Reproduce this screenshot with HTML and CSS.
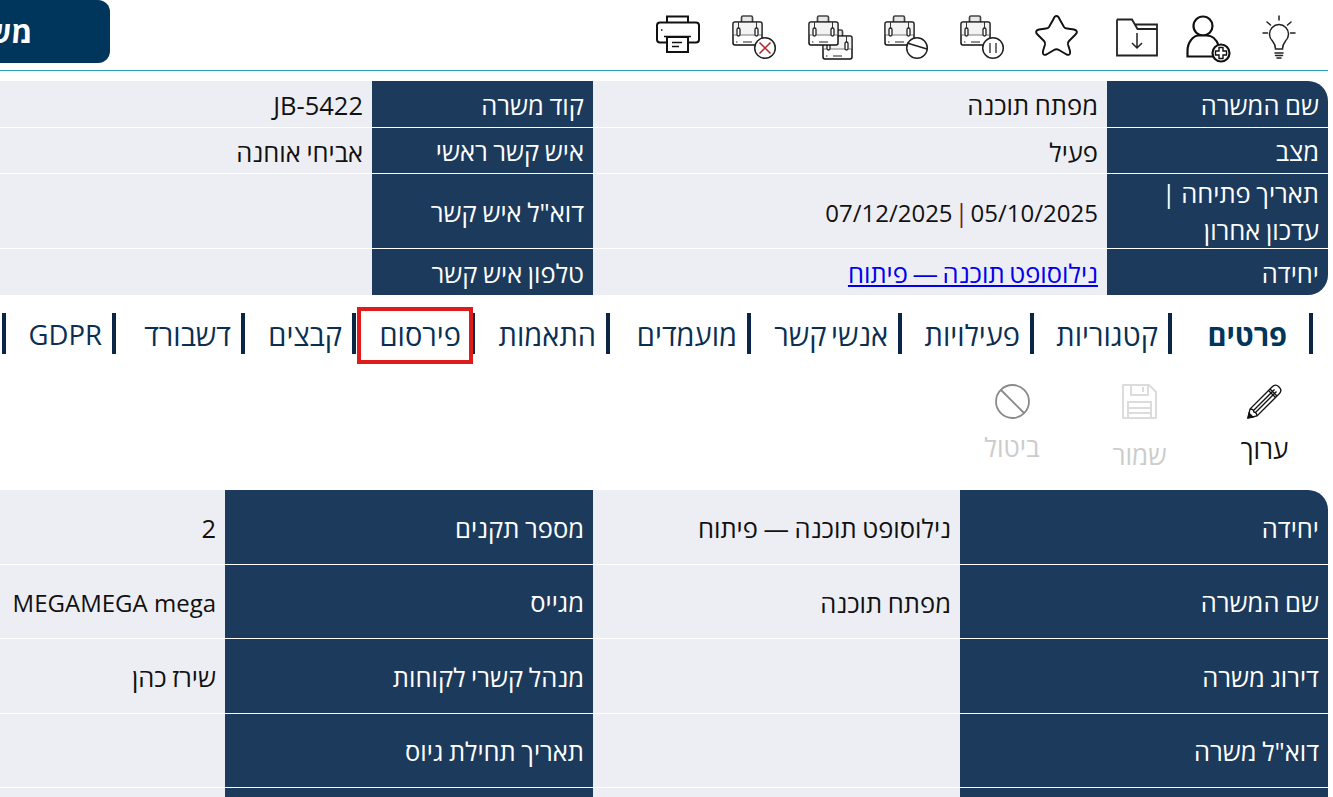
FILE: index.html
```html
<!DOCTYPE html>
<html lang="he" dir="rtl">
<head>
    <meta charset="UTF-8">
    <title>משרה</title>
    <link rel="stylesheet" href="styles.css">
</head>
<body>
    <svg class="defs" width="0" height="0">
        <defs>
            <g id="case">
                <path d="M9.500 7V2.500q0-1.500 1.500-1.500h8q1.500 0 1.500 1.500V7" fill="#e8e8e8" stroke="#444" stroke-width="1.700"/>
                <rect x="1" y="7" width="29" height="23" rx="2" fill="#fff" stroke="#111" stroke-width="1.500"/>
                <path d="M1.800 7.800h27.400v11.700H1.800z" fill="#f3f3f3"/>
                <path d="M1.500 20h28" stroke="#555" stroke-width=".8"/>
                <path d="M6.500 7v6M24.500 7v6" stroke="#333" stroke-width="1"/>
                <rect x="5" y="13" width="3" height="8" rx="1.500" fill="#fff" stroke="#222" stroke-width="1.300"/>
                <rect x="23" y="13" width="3" height="8" rx="1.500" fill="#fff" stroke="#222" stroke-width="1.300"/>
                <path d="M11 27h9M4 27h1.500" stroke="#222" stroke-width="1"/>
            </g>
        </defs>
    </svg>

    <header class="topbar">
        <div class="tools">
            <svg class="tool" width="34" height="48" viewBox="0 0 34 48"><g fill="none" stroke="#222" stroke-width="1.500" stroke-linecap="round"><path d="M13.500 34c0-3-1-5.500-3-8a9.500 9.500 0 1 1 13 0c-2 2.500-3 5-3 8z"/><path d="M13 38h8M13.500 40.500h7M15 43h4M17 1v4M5 7l3.500 3M29 7l-3.500 3M1 18h4.500M28.500 18H33"/></g></svg>
            <svg class="tool" width="44" height="48" viewBox="0 0 44 48"><g fill="#fff" stroke="#111" stroke-width="2.200"><circle cx="17" cy="11" r="9.500"/><path d="M1.500 41.500V36c0-9 6-15.500 11-15.500h8c6 0 10 4 12 10L27 41.500z"/><circle cx="35" cy="38" r="8.500"/></g><path d="M33 32.500h4v3.500h3.500v4H37v3.500h-4V40h-3.500v-4H33z" fill="#fff" stroke="#111" stroke-width="1.400"/></svg>
            <svg class="tool tool-folder" width="42" height="48" viewBox="0 0 42 48"><g fill="none" stroke="#222" stroke-width="1.800"><path d="M1 4.500h15l5.500 9.500H41M1 4.500v36h40V9.500H19"/><path d="M21 18v15M16 28l5 5 5-5" stroke-width="1.500"/></g></svg>
            <svg class="tool tool-star" width="43" height="48" viewBox="0 0 43 48"><path d="M21.500 1Q23.500 1 24.500 4L29 12Q30 13.500 32 13.500L39 14.500Q44 16 40.500 19.500L34 26Q32.500 27.500 33 29.500L35 36Q36 41 31.500 39.500L24 35Q21.500 33.500 19 35L11.500 39.500Q7 41 8 36L10 29.500Q10.500 27.500 9 26L2.500 19.500Q-1 16 4 14.500L11 13.500Q13 13.500 14 12L18.500 4Q19.500 1 21.500 1z" fill="none" stroke="#111" stroke-width="1.900"/></svg>
            <svg class="tool" width="44" height="48" viewBox="0 0 44 48"><use href="#case"/><circle cx="33" cy="33" r="10.300" fill="#fff" stroke="#222" stroke-width="1.500"/><path d="M30 28v10M36 28v10" stroke="#444" stroke-width="1.500"/></svg>
            <svg class="tool" width="44" height="48" viewBox="0 0 44 48"><use href="#case"/><circle cx="33" cy="33" r="10.300" fill="#fff" stroke="#222" stroke-width="1.500"/><path d="M23 28l20 6" stroke="#222" stroke-width="1.500"/></svg>
            <svg class="tool" width="44" height="48" viewBox="0 0 44 48"><use href="#case" x="14" y="14"/><use href="#case"/></svg>
            <svg class="tool" width="44" height="48" viewBox="0 0 44 48"><use href="#case"/><circle cx="33" cy="33" r="10.300" fill="#fff" stroke="#222" stroke-width="1.500"/><path d="M27.500 27.500l11 11M38.500 27.500l-11 11" stroke="#b3202a" stroke-width="1.500"/></svg>
            <svg class="tool" width="44" height="48" viewBox="0 0 44 48"><g fill="#fff" stroke="#111" stroke-width="2"><path d="M11 12V1.500h21V12"/><rect x="1" y="7.500" width="42" height="20" rx="3"/><rect x="11" y="22" width="21" height="15"/></g><path d="M5 15h1.500M8 21.500h27M16 27.500h10M16 31.500h7" stroke="#111" stroke-width="1.500"/></svg>
        </div>
        <button class="main-btn">משרות</button>
    </header>

    <section class="info-table summary">
        <div class="lbl first-lbl">שם המשרה</div><div class="val">מפתח תוכנה</div><div class="lbl">קוד משרה</div><div class="val">JB-5422</div>
        <div class="lbl">מצב</div><div class="val">פעיל</div><div class="lbl">איש קשר ראשי</div><div class="val">אביחי אוחנה</div>
        <div class="lbl">תאריך פתיחה | עדכון אחרון</div><div class="val"><span class="latin">05/10/2025</span><span class="sep">|</span><span class="latin">07/12/2025</span></div><div class="lbl">דוא"ל איש קשר</div><div class="val"></div>
        <div class="lbl last-lbl">יחידה</div><div class="val"><a href="#">נילוסופט תוכנה — פיתוח</a></div><div class="lbl">טלפון איש קשר</div><div class="val"></div>
    </section>

    <nav class="tabs">
        <a class="tab active">פרטים</a>
        <a class="tab">קטגוריות</a>
        <a class="tab">פעילויות</a>
        <a class="tab">אנשי קשר</a>
        <a class="tab">מועמדים</a>
        <a class="tab">התאמות</a>
        <a class="tab marked">פירסום</a>
        <a class="tab">קבצים</a>
        <a class="tab">דשבורד</a>
        <a class="tab tab-last">GDPR</a>
    </nav>

    <div class="actions">
        <div class="action edit">
            <svg width="35" height="35" viewBox="0 0 35 35"><g fill="none" stroke="#111" stroke-width="1.300"><path d="M1 34l2-9L25 3c2.500-2.500 4.500-2.500 6.500-.5l1 1c2 2 2 4-.5 6.500L10 32z"/><path d="M3 25c2 0 3 .5 3.500 1.500 0 1.500.5 2 2 2 .5.500 1.500 1.500 1.500 3.500M6.500 26.500L27.500 5.500M8.500 28.500L29.500 7.500M23 5l7 7M21.500 6.500l7 7"/><path d="M1 34l1-5 4 4z" fill="#111"/></g></svg>
            <span>ערוך</span>
        </div>
        <div class="action off save">
            <svg width="35" height="35" viewBox="0 0 35 35"><g fill="none" stroke="#dcdcdc" stroke-width="2"><path d="M1 1h26l7 7v26H1z" stroke-linejoin="round"/><path d="M9 1v10h17V1M21 3v5M6 34V18h23v16M6 24h23M6 29h23"/></g></svg>
            <span>שמור</span>
        </div>
        <div class="action off cancel">
            <svg width="35" height="35" viewBox="0 0 35 35"><g fill="none" stroke="#8a8a8a" stroke-width="1.800"><circle cx="17.500" cy="17.500" r="16.500"/><path d="M6 6l23 23"/></g></svg>
            <span>ביטול</span>
        </div>
    </div>

    <section class="info-table details">
        <div class="lbl first-lbl">יחידה</div><div class="val">נילוסופט תוכנה — פיתוח</div><div class="lbl">מספר תקנים</div><div class="val">2</div>
        <div class="lbl">שם המשרה</div><div class="val">מפתח תוכנה</div><div class="lbl">מגייס</div><div class="val mega">MEGAMEGA mega</div>
        <div class="lbl">דירוג משרה</div><div class="val"></div><div class="lbl">מנהל קשרי לקוחות</div><div class="val">שירז כהן</div>
        <div class="lbl">דוא"ל משרה</div><div class="val"></div><div class="lbl">תאריך תחילת גיוס</div><div class="val"></div>
        <div class="lbl"></div><div class="val"></div><div class="lbl"></div><div class="val"></div>
    </section>
</body>
</html>
```

FILE: styles.css
```css
* {
    margin: 0;
    padding: 0;
    box-sizing: border-box;
}

html, body {
    height: 797px;
    overflow: hidden;
}

body {
    font-family: "Open Sans", "Liberation Sans", sans-serif;
    font-size: 26px;
    color: #111;
    background-color: white;
    width: 1333px;
}

.defs {
    position: absolute;
}

/* Barra superior */
.topbar {
    height: 71px;
    margin-right: 5px;
    border-bottom: 1px solid #2a9fb5;
    display: flex;
    justify-content: space-between;
    padding-right: 32px;
}

.tools {
    display: flex;
    align-items: flex-start;
    gap: 32px;
    padding-top: 15px;
}

.tool {
    flex: none;
    overflow: visible;
}

.tool-folder {
    margin-right: -4px;
}

.tool-star {
    margin-right: 6px;
    margin-left: -1px;
}

.main-btn {
    width: 246px;
    height: 63px;
    margin-left: -136px;
    background-color: #00355c;
    color: white;
    border: none;
    border-top-right-radius: 12px;
    border-bottom-right-radius: 12px;
    font-family: inherit;
    font-size: 30px;
    font-weight: 700;
    flex: none;
}

/* Tablas */
.info-table {
    display: grid;
    margin-right: 5px;
    gap: 1px 0;
    font-size: 25.5px;
    word-spacing: -1px;
}

.summary {
    width: 1400px;
    margin-top: 10px;
    grid-template-columns: 221px 514px 221px 444px;
    grid-template-rows: 46px 45px 74px 46px;
}

.details {
    width: 1328px;
    grid-template-columns: 368px 367px 368px 225px;
    grid-template-rows: 74px 73px 74px 73px 74px;
}

.lbl {
    background-color: #1b3a5c;
    color: white;
    padding: 2px 9px 0;
    display: flex;
    align-items: center;
    line-height: 37px;
}

.val {
    background-color: #edeef3;
    padding: 2px 9px 0;
    display: flex;
    align-items: center;
    gap: 2px;
    white-space: nowrap;
}

.first-lbl {
    border-top-right-radius: 20px;
}

.last-lbl {
    border-bottom-right-radius: 20px;
}

.val a {
    color: #0000ee;
    word-spacing: -2px;
}

.latin {
    font-size: 24px;
}

.mega {
    font-size: 24px;
    word-spacing: 0;
}

.sep {
    color: #7a1f1f;
}

/* Pestañas */
.tabs {
    display: flex;
    margin-top: 18px;
    margin-right: 20px;
    height: 41px;
}

.tab {
    flex: none;
    position: relative;
    border-right: 4px solid #0b2545;
    padding-right: 10px;
    line-height: 43px;
    font-size: 29px;
    word-spacing: -3px;
    color: #0b2f52;
}

.tab:nth-child(1) { width: 141px; padding-right: 22px; }
.tab:nth-child(2) { width: 138px; }
.tab:nth-child(3) { width: 132px; }
.tab:nth-child(4) { width: 151px; }
.tab:nth-child(5) { width: 141px; }
.tab:nth-child(6) { width: 135px; }
.tab:nth-child(7) { width: 119px; }
.tab:nth-child(8) { width: 111px; }
.tab:nth-child(9) { width: 129px; }
.tab:nth-child(10) { width: 114px; }

.tab-last {
    border-left: 4px solid #0b2545;
    font-size: 27.5px;
}

.active {
    font-weight: 700;
    color: #00355c;
}

.marked::after {
    content: "";
    position: absolute;
    top: -6px;
    bottom: -10px;
    right: -2px;
    left: 1px;
    border: 4px solid #e01b1b;
}

/* Acciones */
.actions {
    display: flex;
    margin-top: 30px;
    margin-right: 6px;
    height: 106px;
}

.action {
    width: 125px;
    display: flex;
    flex-direction: column;
    align-items: center;
    gap: 12px;
}

.off {
    color: #ccc;
}

.save {
    gap: 18px;
}

.cancel {
    width: 130px;
    gap: 10px;
}
```
